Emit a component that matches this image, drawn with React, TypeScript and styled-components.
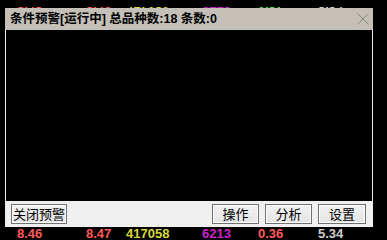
import React from "react";
import styled, { createGlobalStyle } from "styled-components";

const Global = createGlobalStyle`
  html, body { margin: 0; padding: 0; background: #000; }
  body { width: 387px; height: 240px; overflow: hidden; font-family: "Liberation Sans", Arial, sans-serif; }
`;

const Page = styled.div`
  display: flex;
  flex-direction: column;
  width: 387px;
  height: 240px;
  padding-top: 7px;
  box-sizing: border-box;
  background: #000;
  overflow: hidden;
`;

const TopStrip = styled.div`
  height: 1px;
  flex: none;
  overflow: hidden;
`;

const TickerRow = styled.div<{ $offset?: number }>`
  display: grid;
  grid-template-columns: 69px 40px 76px 56px 60px 1fr;
  padding-left: 17px;
  height: 13px;
  margin-top: ${(p) => (p.$offset ? `${p.$offset}px` : "0")};
  font-family: "Liberation Sans", Arial, sans-serif;
  font-weight: bold;
  font-size: 13px;
  line-height: 13px;
`;

const Num = styled.span<{ $color: string }>`
  color: ${(p) => p.$color};
`;

const Window = styled.div`
  margin-left: 5px;
  width: 368px;
  display: flex;
  flex-direction: column;
  flex: none;
`;

const TitleBar = styled.div`
  height: 22px;
  background: #c4c0b7;
  display: flex;
  align-items: center;
  justify-content: space-between;
  padding-left: 5px;
  padding-right: 4px;
  box-sizing: border-box;
`;

const Title = styled.div`
  font-family: "Liberation Sans", "Noto Sans CJK SC", sans-serif;
  font-weight: bold;
  font-size: 12.5px;
  color: #000;
  line-height: 22px;
  white-space: nowrap;
`;

const Close = styled.div`
  width: 12px;
  height: 12px;
  display: flex;
`;

const Content = styled.div`
  height: 171px;
  background: #000;
  border-left: 1px solid #f0f0f0;
  border-right: 1px solid #f0f0f0;
`;

const Footer = styled.div`
  height: 26px;
  background: #f0f0f0;
  display: flex;
  align-items: center;
  padding: 0 7px 0 6px;
  box-sizing: border-box;
  gap: 6px;
`;

const Spacer = styled.div`
  flex: 1;
`;

const Button = styled.button<{ $w: number }>`
  width: ${(p) => p.$w}px;
  height: 20px;
  margin: 0;
  padding: 0;
  box-sizing: border-box;
  border: 1px solid #707070;
  box-shadow: inset 0 0 0 1px #fcfcfc;
  background: linear-gradient(#f2f2f2, #e4e4e4);
  font-family: "Noto Sans CJK SC", sans-serif;
  font-size: 13px;
  line-height: 18px;
  color: #000;
  display: flex;
  align-items: center;
  justify-content: center;
`;

const top = [
  { v: "8.45", c: "#ff5a5a" },
  { v: "8.46", c: "#ff5a5a" },
  { v: "417059", c: "#d8d83a" },
  { v: "6213", c: "#cc22cc" },
  { v: "0.37", c: "#44ee44" },
  { v: "5.34", c: "#d0d0d0" },
];

const bottom = [
  { v: "8.46", c: "#ff5a5a" },
  { v: "8.47", c: "#ff5a5a" },
  { v: "417058", c: "#d8d83a" },
  { v: "6213", c: "#cc22cc" },
  { v: "0.36", c: "#ff5a5a" },
  { v: "5.34", c: "#d0d0d0" },
];

export default function App() {
  return (
    <>
      <Global />
      <Page>
        <TopStrip>
          <TickerRow $offset={-10}>
            {top.map((n, i) => (
              <Num key={i} $color={n.c}>{n.v}</Num>
            ))}
          </TickerRow>
        </TopStrip>
        <Window>
          <TitleBar>
            <Title>条件预警[运行中] 总品种数:18 条数:0</Title>
            <Close>
              <svg width="12" height="12" viewBox="0 0 12 12">
                <path d="M0.5 0.5 L11.5 11.5 M11.5 0.5 L0.5 11.5" stroke="#8a8780" strokeWidth="1" fill="none" />
              </svg>
            </Close>
          </TitleBar>
          <Content />
          <Footer>
            <Button $w={56}>关闭预警</Button>
            <Spacer />
            <Button $w={47}>操作</Button>
            <Button $w={47}>分析</Button>
            <Button $w={48}>设置</Button>
          </Footer>
        </Window>
        <TickerRow>
          {bottom.map((n, i) => (
            <Num key={i} $color={n.c}>{n.v}</Num>
          ))}
        </TickerRow>
      </Page>
    </>
  );
}
